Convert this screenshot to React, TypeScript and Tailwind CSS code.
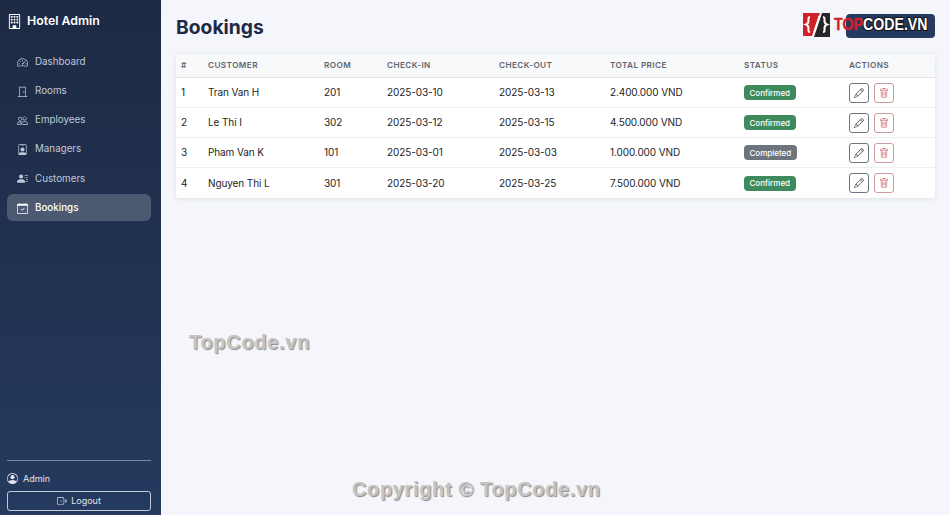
import React from 'react';
import {
  BsBuilding,
  BsSpeedometer2,
  BsDoorClosed,
  BsPeople,
  BsPersonBadge,
  BsPersonLinesFill,
  BsCalendarCheck,
  BsPersonCircle,
  BsBoxArrowRight,
  BsPencil,
  BsTrash,
} from 'react-icons/bs';

const navItems = [
  { label: 'Dashboard', icon: BsSpeedometer2 },
  { label: 'Rooms', icon: BsDoorClosed },
  { label: 'Employees', icon: BsPeople },
  { label: 'Managers', icon: BsPersonBadge },
  { label: 'Customers', icon: BsPersonLinesFill },
  { label: 'Bookings', icon: BsCalendarCheck, active: true },
];

const bookings = [
  { id: 1, customer: 'Tran Van H', room: '201', checkIn: '2025-03-10', checkOut: '2025-03-13', total: '2.400.000 VND', status: 'Confirmed' },
  { id: 2, customer: 'Le Thi I', room: '302', checkIn: '2025-03-12', checkOut: '2025-03-15', total: '4.500.000 VND', status: 'Confirmed' },
  { id: 3, customer: 'Pham Van K', room: '101', checkIn: '2025-03-01', checkOut: '2025-03-03', total: '1.000.000 VND', status: 'Completed' },
  { id: 4, customer: 'Nguyen Thi L', room: '301', checkIn: '2025-03-20', checkOut: '2025-03-25', total: '7.500.000 VND', status: 'Confirmed' },
];

const headers = ['#', 'Customer', 'Room', 'Check-in', 'Check-out', 'Total Price', 'Status', 'Actions'];
const widths = ['w-[27px]', 'w-[116px]', 'w-[63px]', 'w-[112px]', 'w-[111px]', 'w-[134px]', 'w-[105px]', 'w-[91px]'];

export default function App() {
  return (
    <div className="relative flex h-[515px] w-[950px] overflow-hidden bg-[#f4f6fb] font-['Inter',sans-serif]">
      <aside className="flex w-[161px] shrink-0 flex-col bg-gradient-to-b from-[#1e2a44] to-[#243a5e] pl-[7px] pr-[10px] pb-[4px] text-white">
        <div className="flex h-[42px] items-center gap-[5px] text-[12.3px] font-semibold">
          <BsBuilding className="text-[15px]" />
          <span>Hotel Admin</span>
        </div>
        <nav className="mt-[6px] flex flex-col gap-[2px]">
          {navItems.map((item) => (
            <div
              key={item.label}
              className={`flex h-[27.2px] items-center gap-[7px] rounded-md px-[10px] pt-[1px] text-[9.8px] ${
                item.active ? 'bg-white/20 font-medium text-white' : 'text-[#c0c9d8]'
              }`}
            >
              <item.icon className="text-[11px]" />
              <span>{item.label}</span>
            </div>
          ))}
        </nav>
        <div className="mt-auto border-t border-[#7f8ca3] pt-[11px]">
          <div className="flex items-center gap-[5px] text-[9px] text-[#e2e6ee]">
            <BsPersonCircle className="text-[11px]" />
            <span>Admin</span>
          </div>
          <button className="mt-[6px] flex h-[20px] w-full items-center justify-center gap-[4px] rounded-[3px] border border-[#c3cad6] text-[9px] text-[#e2e6ee]">
            <BsBoxArrowRight className="text-[10px]" />
            Logout
          </button>
        </div>
      </aside>

      <main className="flex min-w-0 flex-1 flex-col pl-[15px] pr-[15px]">
        <div className="flex h-[54px] items-center justify-between">
          <h1 className="text-[19.3px] font-bold text-[#1e2a44]">Bookings</h1>
          <div className="mt-[-2px] h-[24px] w-[89px] rounded-[4px] bg-[#243a5e]" />
        </div>

        <div className="overflow-hidden rounded-[3px] bg-white shadow-[0_1px_4px_rgba(30,42,68,0.10)]">
          <div className="flex h-[24px] items-center border-b border-[#dfe2e7] bg-[#f8f9fb]">
            {headers.map((h, i) => (
              <div key={h} className={`${widths[i]} px-[5px] text-[8.2px] font-semibold uppercase tracking-[0.4px] text-[#5f656f]`}>
                {h}
              </div>
            ))}
          </div>
          {bookings.map((b) => (
            <div key={b.id} className="flex h-[30px] items-center border-b border-[#eceef1] text-[10px] tracking-[-0.1px] text-[#212529] last:border-b-0">
              <div className={`${widths[0]} px-[5px]`}>{b.id}</div>
              <div className={`${widths[1]} px-[5px]`}>{b.customer}</div>
              <div className={`${widths[2]} px-[5px]`}>{b.room}</div>
              <div className={`${widths[3]} px-[5px]`}>{b.checkIn}</div>
              <div className={`${widths[4]} px-[5px]`}>{b.checkOut}</div>
              <div className={`${widths[5]} px-[5px]`}>{b.total}</div>
              <div className={`${widths[6]} px-[5px]`}>
                <span
                  className={`inline-flex h-[15px] items-center rounded-[4px] px-[5.5px] text-[8px] font-medium tracking-normal text-white ${
                    b.status === 'Confirmed' ? 'bg-[#3f8a5c]' : 'bg-[#6c757d]'
                  }`}
                >
                  {b.status}
                </span>
              </div>
              <div className={`${widths[7]} flex gap-[5px] px-[5px]`}>
                <button className="flex h-[20px] w-[20px] items-center justify-center rounded-[3px] border border-[#6c757d] text-[#4b5563]">
                  <BsPencil className="text-[10px]" />
                </button>
                <button className="flex h-[20px] w-[20px] items-center justify-center rounded-[3px] border border-[#cf9aa0] text-[#c9606a]">
                  <BsTrash className="text-[10px]" />
                </button>
              </div>
            </div>
          ))}
        </div>
      </main>

      {/* watermark layered over the page */}
      <div className="absolute left-[803px] top-[12px] flex items-center gap-[4px]">
        <svg width="27" height="25" viewBox="0 0 27 25">
          <path d="M0 1H17L9 24H0Z" fill="#d0202a" />
          <path d="M19 1H27V25H11Z" fill="#262626" />
          <path d="M7 5C5 5 5.500 7 5.500 9C5.500 11 4.500 12 3 12.500C4.500 13 5.500 14 5.500 16C5.500 18 5 20 7 20" fill="none" stroke="#fff" strokeWidth="2" />
          <path d="M20 5C22 5 21.500 7 21.500 9C21.500 11 22.500 12 24 12.500C22.500 13 21.500 14 21.500 16C21.500 18 22 20 20 20" fill="none" stroke="#fff" strokeWidth="2" />
          <path d="M16.500 4L11 21" stroke="#fff" strokeWidth="2" />
        </svg>
        <span className="origin-left scale-x-[0.86] font-['Liberation_Sans',sans-serif] text-[16.5px] leading-none font-bold">
          <span className="text-[#d0202a] [-webkit-text-stroke:0.4px_#d0202a]">TOP</span>
          <span className="text-white [paint-order:stroke_fill] [-webkit-text-stroke:2.2px_#111]">CODE.VN</span>
        </span>
      </div>
      <div className="absolute left-[189px] top-[327px] font-['Liberation_Sans',sans-serif] text-[20px] font-bold tracking-[0.7px] text-[#c4c4c4] [text-shadow:1px_1px_1px_#8a8a8a]">
        TopCode.vn
      </div>
      <div className="absolute left-[352px] top-[474px] font-['Liberation_Sans',sans-serif] text-[20px] font-bold tracking-[0.65px] text-[#c4c4c4] [text-shadow:1px_1px_1px_#8a8a8a]">
        Copyright © TopCode.vn
      </div>
    </div>
  );
}
